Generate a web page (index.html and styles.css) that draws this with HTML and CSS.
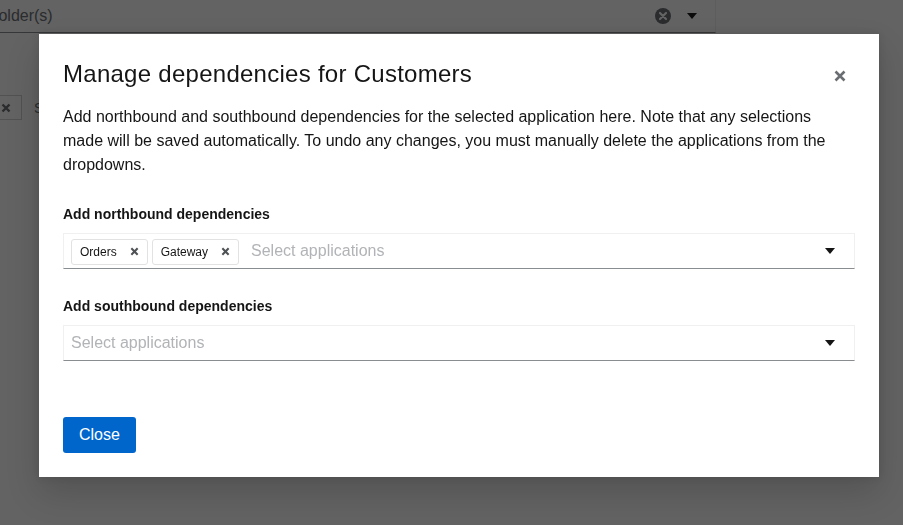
FILE: index.html
```html
<!DOCTYPE html>
<html lang="en">
<head>
<meta charset="utf-8">
<title>Manage dependencies</title>
<link rel="stylesheet" href="styles.css">
</head>
<body>
<div class="page">
  <div class="bg-select">
    <span class="bg-placeholder">folder(s)</span>
    <span class="bg-actions">
      <svg class="bg-clear" width="16" height="16" viewBox="0 0 16 16"><circle cx="8" cy="8" r="8" fill="#6a6e73"/><path d="M5 5 L11 11 M11 5 L5 11" stroke="#fff" stroke-width="2.2" stroke-linecap="round"/></svg>
      <svg class="bg-caret" width="10" height="6" viewBox="0 0 10 6"><path d="M0 0 H10 L5 6 Z" fill="#151515"/></svg>
    </span>
  </div>
  <div class="bg-row">
    <span class="bg-chip"><svg width="10" height="10" viewBox="0 0 10 10"><path d="M1.5 1.5 L8.5 8.5 M8.5 1.5 L1.5 8.5" stroke="#6a6e73" stroke-width="2.4"/></svg></span>
    <span class="bg-text">S</span>
  </div>
</div>

<div class="backdrop">
  <div class="modal" role="dialog" aria-labelledby="mtitle">
    <button class="modal-close" aria-label="Close">
      <svg width="12" height="12" viewBox="0 0 12 12"><path d="M1.5 1.5 L10.5 10.5 M10.5 1.5 L1.5 10.5" stroke="#6a6e73" stroke-width="2.6"/></svg>
    </button>
    <h1 class="modal-title" id="mtitle">Manage dependencies for Customers</h1>
    <p class="modal-desc">Add northbound and southbound dependencies for the selected application here. Note that any selections made will be saved automatically. To undo any changes, you must manually delete the applications from the dropdowns.</p>

    <div class="form-group first">
      <label class="form-label">Add northbound dependencies</label>
      <div class="select">
        <div class="select-main">
          <span class="chip">Orders<svg class="chip-x" width="9" height="9" viewBox="0 0 10 10"><path d="M1.5 1.5 L8.5 8.5 M8.5 1.5 L1.5 8.5" stroke="#4f5255" stroke-width="2.3"/></svg></span>
          <span class="chip">Gateway<svg class="chip-x" width="9" height="9" viewBox="0 0 10 10"><path d="M1.5 1.5 L8.5 8.5 M8.5 1.5 L1.5 8.5" stroke="#4f5255" stroke-width="2.3"/></svg></span>
          <span class="placeholder">Select applications</span>
        </div>
        <svg class="caret" width="10" height="6" viewBox="0 0 10 6"><path d="M0 0 H10 L5 6 Z" fill="#151515"/></svg>
      </div>
    </div>

    <div class="form-group second">
      <label class="form-label">Add southbound dependencies</label>
      <div class="select">
        <div class="select-main">
          <span class="placeholder">Select applications</span>
        </div>
        <svg class="caret" width="10" height="6" viewBox="0 0 10 6"><path d="M0 0 H10 L5 6 Z" fill="#151515"/></svg>
      </div>
    </div>

    <div class="modal-footer">
      <button class="btn-primary">Close</button>
    </div>
  </div>
</div>
</body>
</html>
```

FILE: styles.css
```css
* { box-sizing: border-box; }
html, body { margin: 0; padding: 0; }
body {
  width: 903px;
  height: 525px;
  overflow: hidden;
  font-family: "Liberation Sans", Arial, sans-serif;
  color: #151515;
  background: #fff;
}

/* underlying page */
.page { width: 903px; height: 525px; background: #fff; }
.bg-select {
  width: 716px;
  height: 33px;
  display: flex;
  align-items: center;
  justify-content: space-between;
  border-bottom: 1px solid #8a8d90;
  border-right: 1px solid #f0f0f0;
}
.bg-placeholder {
  margin-left: -6px;
  font-size: 16px;
  color: #6a6e73;
}
.bg-actions { display: flex; align-items: center; gap: 16px; padding-right: 18px; }
.bg-row {
  margin-top: 62px;
  display: flex;
  align-items: center;
  gap: 12px;
  height: 25px;
}
.bg-chip {
  width: 22px;
  height: 25px;
  border: 1px solid #d2d2d2;
  border-left: none;
  display: flex;
  align-items: center;
}
.bg-chip svg { margin-left: 1px; }
.bg-text { font-size: 14px; color: #6a6e73; }

/* backdrop */
.backdrop {
  position: fixed;
  inset: 0;
  background: rgba(3, 3, 3, 0.62);
  display: flex;
  align-items: flex-start;
  justify-content: flex-start;
  padding: 34px 0 0 39px;
}
.modal {
  position: relative;
  width: 840px;
  height: 443px;
  background: #fff;
  padding: 24px;
  box-shadow: 0 16px 32px rgba(3,3,3,0.16), 0 0 8px rgba(3,3,3,0.1);
  display: flex;
  flex-direction: column;
}
.modal-close {
  position: absolute;
  top: 31px;
  right: 28px;
  width: 22px;
  height: 22px;
  border: none;
  background: none;
  padding: 0;
  display: flex;
  align-items: center;
  justify-content: center;
}
.modal-title {
  margin: 0;
  font-size: 24px;
  font-weight: 400;
  line-height: 31px;
  color: #151515;
  letter-spacing: 0.27px;
}
.modal-desc {
  margin: 16px 0 0 0;
  font-size: 16px;
  line-height: 24px;
  color: #151515;
}
.form-group { display: flex; flex-direction: column; }
.form-group.first { margin-top: 27px; }
.form-group.second { margin-top: 27px; }
.form-label {
  font-size: 14px;
  font-weight: 700;
  line-height: 21px;
  padding-bottom: 8px;
  color: #151515;
}
.select {
  height: 36px;
  display: flex;
  align-items: center;
  justify-content: space-between;
  border: 1px solid #f0f0f0;
  border-bottom: 1px solid #8a8d90;
  padding: 0 19px 0 7px;
}
.select-main { display: flex; align-items: center; gap: 4px; }
.chip {
  display: inline-flex;
  align-items: center;
  height: 26px;
  margin-top: 1px;
  padding: 0 8px 0 8px;
  border: 1px solid #e2e2e2;
  border-radius: 3px;
  font-size: 12px;
  color: #151515;
  gap: 13px;
}
.chip-x { display: block; }
.placeholder {
  margin-left: 8px;
  font-size: 16px;
  color: #b1b3b6;
}
.select-main .placeholder:first-child { margin-left: 0; }
.caret { display: block; }

.modal-footer { margin-top: 56px; display: flex; }
.btn-primary {
  height: 36px;
  padding: 0 16px;
  background: #0066cc;
  color: #fff;
  border: none;
  border-radius: 3px;
  font-family: inherit;
  font-size: 16px;
  line-height: 24px;
}
```
